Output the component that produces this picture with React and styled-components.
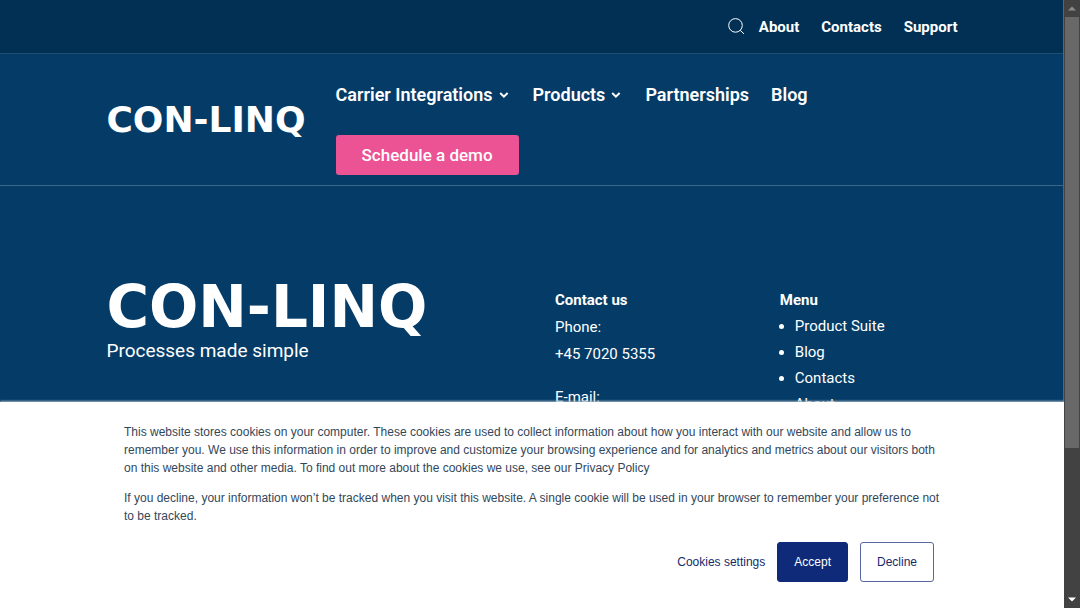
import React from 'react';
import styled, { createGlobalStyle } from 'styled-components';

const Global = createGlobalStyle`
  *, *::before, *::after { box-sizing: border-box; }
  body {
    margin: 0;
    background: #053c67;
    color: #fff;
    font-family: Roboto, "Liberation Sans", sans-serif;
    font-size: 15px;
    overflow: hidden;
  }
  p, h4, ul { margin: 0; }
  a { color: inherit; text-decoration: none; }
  button { font: inherit; cursor: pointer; }
`;

const Window = styled.div`
  display: flex;
  height: 100vh;
  overflow: hidden;
`;

const Viewport = styled.div`
  position: relative;
  flex: 1;
  min-width: 0;
  overflow: hidden;
  &::after {
    content: "";
    position: absolute;
    top: 0;
    right: 0;
    bottom: 0;
    width: 1px;
    background: #3f6c8d;
  }
`;

const Container = styled.div`
  width: 80%;
  margin: 0 auto;
`;

const TopBar = styled.div`
  background: #013054;
  border-bottom: 1px solid #1c4f72;
`;

const TopLinks = styled(Container).attrs({ as: 'nav' })`
  display: flex;
  justify-content: flex-end;
  align-items: center;
  gap: 22px;
  height: 53px;
  font-weight: 700;
`;

const SearchButton = styled.button`
  display: flex;
  width: 18px;
  height: 18px;
  padding: 0;
  margin-right: -8px;
  border: 0;
  background: none;
  color: #fff;
`;

const Header = styled.header`
  border-bottom: 1px solid #3b6889;
`;

const HeaderRow = styled(Container)`
  display: flex;
  align-items: center;
  gap: 30px;
  height: 131px;
`;

const Wordmark = styled.a`
  flex: none;
  display: block;
  font-family: "DejaVu Sans", sans-serif;
  font-weight: 700;
  font-size: ${(p) => (p.$large ? 58 : 36)}px;
  line-height: ${(p) => (p.$large ? 50 : 32)}px;
`;

const MainNav = styled.nav`
  display: flex;
  flex-direction: column;
  align-items: flex-start;
  gap: 28px;
  padding-top: 25px;
  padding-bottom: 6px;
`;

const NavRow = styled.div`
  display: flex;
  gap: 22px;
  font-size: 18px;
  line-height: 24px;
  font-weight: 600;
`;

const NavLink = styled.a`
  display: flex;
  align-items: center;
  gap: 5px;
`;

const DemoButton = styled.button`
  height: 40px;
  padding: 0 26px;
  border: 0;
  border-radius: 3px;
  background: #eb5394;
  color: #fff;
  font-size: 17px;
  font-weight: 500;
`;

const Footer = styled(Container).attrs({ as: 'footer' })`
  display: grid;
  grid-template-columns: 402fr 178fr 178fr;
  gap: 47px;
  padding-top: 96px;
`;

const Tagline = styled.p`
  margin-top: 7px;
  font-size: 19px;
  line-height: 24px;
`;

const Column = styled.div`
  padding-top: 5px;
  line-height: 26px;
`;

const ColumnTitle = styled.h4`
  font-size: 15px;
  line-height: 26px;
  font-weight: 700;
`;

const ContactBlock = styled.p`
  line-height: 27px;
  margin-top: 1px;
  margin-bottom: 16px;
`;

const MenuList = styled.ul`
  padding-left: 15px;
`;

const CookieBanner = styled.section`
  position: absolute;
  z-index: 1;
  left: 0;
  right: 0;
  bottom: 0;
  padding: 21px 124px 26px;
  background: #fff;
  color: #33475b;
  font: 12px/18px "Liberation Sans", Arial, sans-serif;
  box-shadow: 0 -1px 2px #9fb3c4;
`;

const CookieText = styled.p`
  margin-bottom: 12px;
`;

const CookieActions = styled.div`
  display: flex;
  justify-content: flex-end;
  align-items: center;
  gap: 12px;
  padding-top: 5px;
  padding-right: 6px;
`;

const CookieLink = styled.button`
  padding: 0;
  border: 0;
  background: none;
  color: #15296b;
`;

const CookieButton = styled.button`
  height: 40px;
  padding: 0 16px;
  border: 1px solid ${(p) => (p.$primary ? '#0e2a78' : '#5767a0')};
  border-radius: 3px;
  background: ${(p) => (p.$primary ? '#0e2a78' : '#fff')};
  color: ${(p) => (p.$primary ? '#fff' : '#15296b')};
`;

const Scrollbar = styled.div`
  flex: none;
  display: flex;
  flex-direction: column;
  width: 16px;
  background: #424242;
`;

const ScrollArrow = styled.div`
  display: flex;
  align-items: center;
  justify-content: center;
  height: 17px;
`;

const ScrollTrack = styled.div`
  flex: 1;
  padding: 0 1px;
`;

const ScrollThumb = styled.div`
  height: 75%;
  background: #686868;
`;

const Chevron = () => (
  <svg width="13" height="10" viewBox="0 0 13 10" fill="none" stroke="currentColor" strokeWidth="2" aria-hidden="true">
    <path d="M2.2 3l3.7 3.7L9.6 3" />
  </svg>
);

export default function App() {
  return (
    <>
      <Global />
      <Window>
        <Viewport>
          <TopBar>
            <TopLinks>
              <SearchButton aria-label="Search">
                <svg width="18" height="18" viewBox="0 0 18 18" fill="none" stroke="currentColor" strokeWidth="1">
                  <circle cx="8.5" cy="7.4" r="6.8" />
                  <path d="M13.1 12.2l3.9 3.7" />
                </svg>
              </SearchButton>
              <a href="#about">About</a>
              <a href="#contacts">Contacts</a>
              <a href="#support">Support</a>
            </TopLinks>
          </TopBar>
          <Header>
            <HeaderRow>
              <Wordmark href="#home">CON-LINQ</Wordmark>
              <MainNav>
                <NavRow>
                  <NavLink href="#carriers">Carrier Integrations <Chevron /></NavLink>
                  <NavLink href="#products">Products <Chevron /></NavLink>
                  <NavLink href="#partnerships">Partnerships</NavLink>
                  <NavLink href="#blog">Blog</NavLink>
                </NavRow>
                <DemoButton>Schedule a demo</DemoButton>
              </MainNav>
            </HeaderRow>
          </Header>
          <Footer>
            <div>
              <Wordmark $large href="#home">CON-LINQ</Wordmark>
              <Tagline>Processes made simple</Tagline>
            </div>
            <Column>
              <ColumnTitle>Contact us</ColumnTitle>
              <ContactBlock>Phone:<br /><a href="tel:+4570205355">+45 7020 5355</a></ContactBlock>
              <ContactBlock>E-mail:</ContactBlock>
            </Column>
            <Column>
              <ColumnTitle>Menu</ColumnTitle>
              <MenuList>
                <li><a href="#suite">Product Suite</a></li>
                <li><a href="#blog">Blog</a></li>
                <li><a href="#contacts">Contacts</a></li>
                <li><a href="#about">About</a></li>
              </MenuList>
            </Column>
          </Footer>
          <CookieBanner aria-label="Cookies">
            <CookieText>
              This website stores cookies on your computer. These cookies are used to collect information about how you interact with our website and allow us to remember you. We use this information in order to improve and customize your browsing experience and for analytics and metrics about our visitors both on this website and other media. To find out more about the cookies we use, see our Privacy Policy
            </CookieText>
            <CookieText>
              If you decline, your information won’t be tracked when you visit this website. A single cookie will be used in your browser to remember your preference not to be tracked.
            </CookieText>
            <CookieActions>
              <CookieLink>Cookies settings</CookieLink>
              <CookieButton $primary>Accept</CookieButton>
              <CookieButton>Decline</CookieButton>
            </CookieActions>
          </CookieBanner>
        </Viewport>
        <Scrollbar aria-hidden="true">
          <ScrollArrow>
            <svg width="8" height="5" viewBox="0 0 8 5"><path d="M0 4.5L4 .5l4 4z" fill="#8c8c8c" /></svg>
          </ScrollArrow>
          <ScrollTrack><ScrollThumb /></ScrollTrack>
          <ScrollArrow>
            <svg width="8" height="5" viewBox="0 0 8 5"><path d="M0 .5l4 4 4-4z" fill="#fff" /></svg>
          </ScrollArrow>
        </Scrollbar>
      </Window>
    </>
  );
}
